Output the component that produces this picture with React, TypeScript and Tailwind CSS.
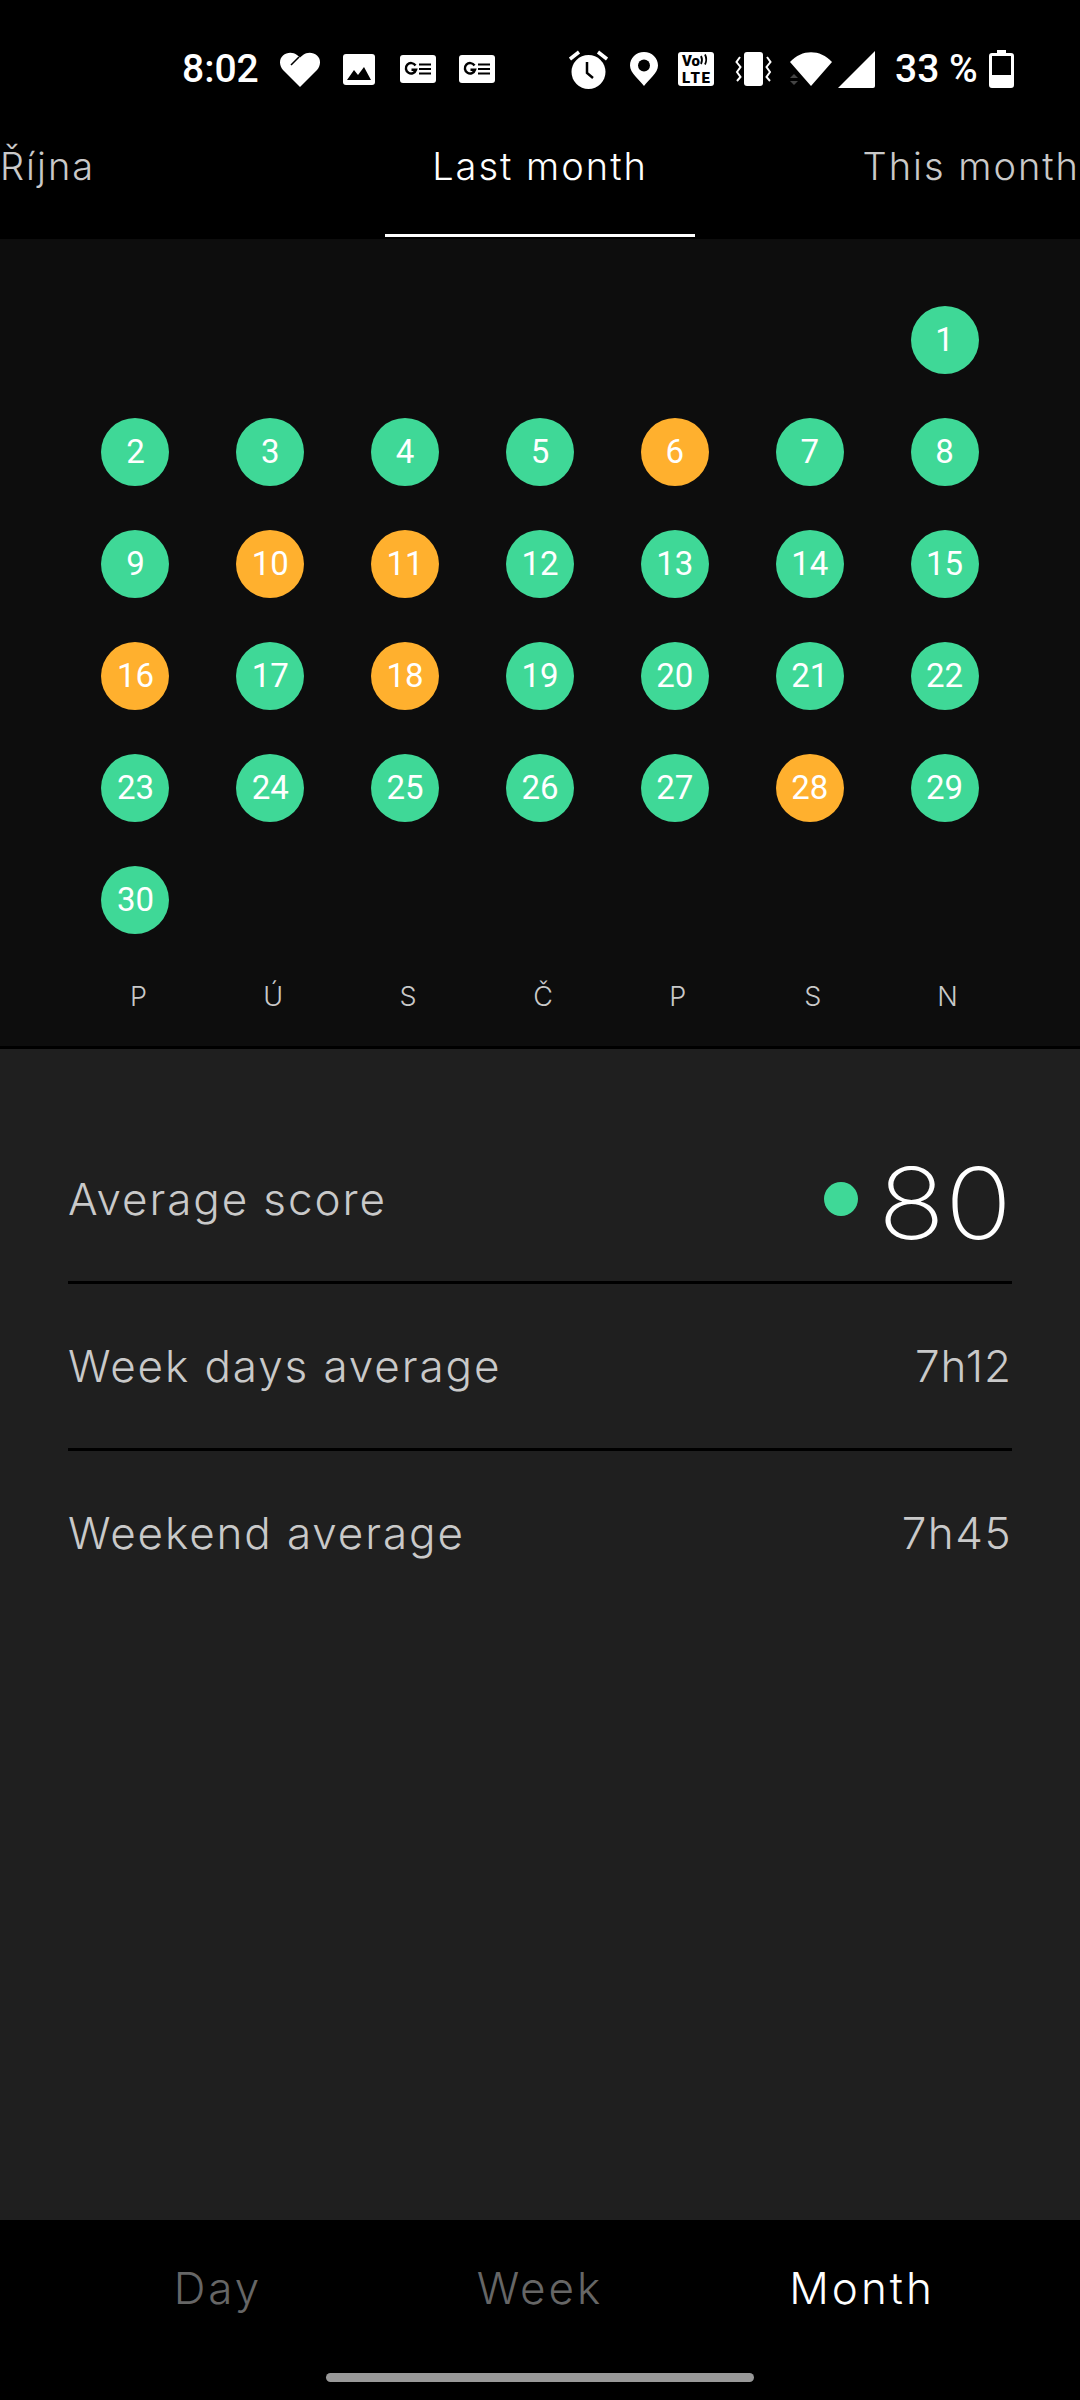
const orangeDays = [6, 10, 11, 16, 18, 28];
const weekdays = ['P', 'Ú', 'S', 'Č', 'P', 'S', 'N'];
// the month starts on a Sunday, so six blanks come first
const days = [...Array(6).fill(0), ...Array.from({ length: 30 }, (_, i) => i + 1)];

function NewsIcon({ className }: { className: string }) {
  return (
    <svg viewBox="0 0 36 28" className={className}>
      <rect width="36" height="28" rx="3" fill="#fff" />
      <path d="M15.5 10.5a5.2 5.2 0 1 0 .6 4.2h-4.6" fill="none" stroke="#000" strokeWidth="2.4" />
      <path d="M19 9.5h12M19 14h12M19 18.5h12" stroke="#000" strokeWidth="2.2" />
    </svg>
  );
}

function StatusBar() {
  return (
    <div className="h-[130px] flex items-center pl-[182px] pt-[8px] text-white font-['Roboto',sans-serif] font-medium text-[39px]">
      <span className="w-[75px] leading-none">8:02</span>
      <svg viewBox="0 0 40 35" className="w-[40px] h-[35px] ml-[23px]">
        <path d="M20 35 3 18C-1 13-1 7 3 3.500 7 0 13 0 17 3L20 5.500 23 3C27 0 33 0 37 3.500 41 7 41 13 37 18Z" fill="#fff" />
        <path d="M11 13 19 5" stroke="#000" strokeWidth="1.600" />
      </svg>
      <svg viewBox="0 0 32 31" className="w-[32px] h-[31px] ml-[23px]">
        <rect width="32" height="31" rx="3" fill="#fff" />
        <path d="M4 26 11 16 15 21 21 13 28 26Z" fill="#000" />
      </svg>
      <NewsIcon className="w-[36px] h-[28px] ml-[25px]" />
      <NewsIcon className="w-[36px] h-[28px] ml-[23px]" />
      <svg viewBox="0 0 39 39" className="w-[39px] h-[39px] ml-[74px]">
        <circle cx="19.500" cy="22" r="17" fill="#fff" />
        <path d="M1 9 10 2M38 9 29 2" stroke="#fff" strokeWidth="3.500" />
        <path d="M18 12v11l6 5" fill="none" stroke="#000" strokeWidth="2.500" />
      </svg>
      <svg viewBox="0 0 28 34" className="w-[28px] h-[34px] ml-[22px]">
        <path d="M14 34C9 27 0 21 0 13.500 0 6 6 0 14 0S28 6 28 13.500C28 21 19 27 14 34Z" fill="#fff" />
        <circle cx="14" cy="13.500" r="6" fill="#000" />
      </svg>
      <svg viewBox="0 0 36 34" className="w-[36px] h-[34px] ml-[20px]">
        <rect width="36" height="34" rx="3" fill="#fff" />
        <text x="4" y="14" fontSize="15" fontWeight="900" fontFamily="Roboto, sans-serif" fill="#000">Vo</text>
        <text x="4" y="31" fontSize="15" fontWeight="900" fontFamily="Roboto, sans-serif" fill="#000" textLength="28">LTE</text>
        <path d="M23 4q2 4 0 8M27 2.500q2.500 5 0 10" fill="none" stroke="#000" strokeWidth="1.800" />
      </svg>
      <svg viewBox="0 0 37 34" className="w-[37px] h-[34px] ml-[21px]">
        <rect x="9" width="19" height="34" rx="3" fill="#fff" />
        <path d="M5 5 1.500 10 5.500 15 2 20 5.500 25 2 29M32 5 35.500 10 31.500 15 35 20 31.500 25 35 29" fill="none" stroke="#fff" strokeWidth="2" />
      </svg>
      <svg viewBox="0 0 42 34" className="w-[42px] h-[34px] ml-[18px]">
        <path d="M21 34 0 10C12-3 30-3 42 10Z" fill="#fff" />
        <path d="M0 26 4 22 8 26ZM0 29 8 29 4 33Z" fill="#444" />
      </svg>
      <svg viewBox="0 0 38 37" className="w-[38px] h-[37px] ml-[5px]">
        <path d="M38 0V35a2 2 0 0 1-2 2H1Z" fill="#fff" />
      </svg>
      <span className="ml-[20px] w-[82px] leading-none whitespace-nowrap">33 %</span>
      <svg viewBox="0 0 25 38" className="w-[25px] h-[38px] ml-[12px]">
        <path d="M8 0h9v3h5a3 3 0 0 1 3 3v29a3 3 0 0 1-3 3H3a3 3 0 0 1-3-3V6a3 3 0 0 1 3-3h5Z" fill="#fff" />
        <rect x="3" y="6" width="19" height="19" fill="#000" />
      </svg>
    </div>
  );
}

function StatRow({ label, value, last }: { label: string; value: React.ReactNode; last?: boolean }) {
  return (
    <div className={`h-[167px] flex items-center justify-between ${last ? 'pb-[3px]' : 'border-b-[3px] border-black'}`}>
      <span className="text-[44px] tracking-[1.9px] text-[#c9c9c9] font-[350]">{label}</span>
      {value}
    </div>
  );
}

export default function App() {
  return (
    <div className="w-[1080px] h-[2400px] bg-black flex flex-col font-['Inter',sans-serif] overflow-hidden">
      <StatusBar />

      <div className="h-[109px] grid grid-cols-[1fr_310px_1fr] text-[38px] tracking-[2px] font-[350]">
        <div className="h-[104px] pb-[32px] flex items-center justify-start text-[#c9c9c9]">Října</div>
        <div className="h-[107px] pb-[32px] flex items-center justify-center text-white border-b-[3px] border-white">Last month</div>
        <div className="h-[104px] pb-[32px] flex items-center justify-end text-[#c9c9c9]">This month</div>
      </div>

      <div className="h-[810px] bg-[#0d0d0d] border-b-[3px] border-black px-[68px] pt-[67px]">
        <div className="grid grid-cols-7 gap-y-[44px]">
          {days.map((day, i) => (
            <div key={i} className="h-[68px] flex justify-center">
              {day > 0 && (
                <div className={`w-[68px] h-[68px] rounded-full flex items-center justify-center text-white text-[33px] font-['Roboto',sans-serif] ${orangeDays.includes(day) ? 'bg-[#ffb02e]' : 'bg-[#3fd897]'}`}>
                  {day}
                </div>
              )}
            </div>
          ))}
        </div>
        <div className="grid grid-cols-7 w-[944px] ml-[3px] mt-[44px] text-[27px] font-light text-[#c9c9c9]">
          {weekdays.map((d, i) => (
            <div key={i} className="h-[38px] flex items-center justify-center">{d}</div>
          ))}
        </div>
      </div>

      <div className="flex-1 bg-[#1f1f1f] px-[68px] pt-[68px]">
        <StatRow
          label="Average score"
          value={
            <div className="flex items-center">
              <div className="w-[34px] h-[34px] rounded-full bg-[#3fd897]" />
              <span className="ml-[28px] w-[126px] pt-[8px] text-right text-[99px] leading-none text-white font-extralight scale-x-[1.12] origin-right">80</span>
            </div>
          }
        />
        <StatRow label="Week days average" value={<span className="text-[44px] tracking-[1px] text-[#c9c9c9] font-[350]">7h12</span>} />
        <StatRow label="Weekend average" value={<span className="text-[44px] tracking-[1.5px] text-[#c9c9c9] font-[350]">7h45</span>} last />
      </div>

      <div className="h-[180px] flex flex-col items-center">
        <div className="w-[966px] h-[136px] grid grid-cols-3 text-[44px] tracking-[3px] font-[350]">
          <div className="flex items-center justify-center text-[#666666]">Day</div>
          <div className="flex items-center justify-center text-[#666666]">Week</div>
          <div className="flex items-center justify-center text-white">Month</div>
        </div>
        <div className="w-[428px] h-[9px] mt-[17px] rounded-full bg-[#999999]" />
      </div>
    </div>
  );
}
